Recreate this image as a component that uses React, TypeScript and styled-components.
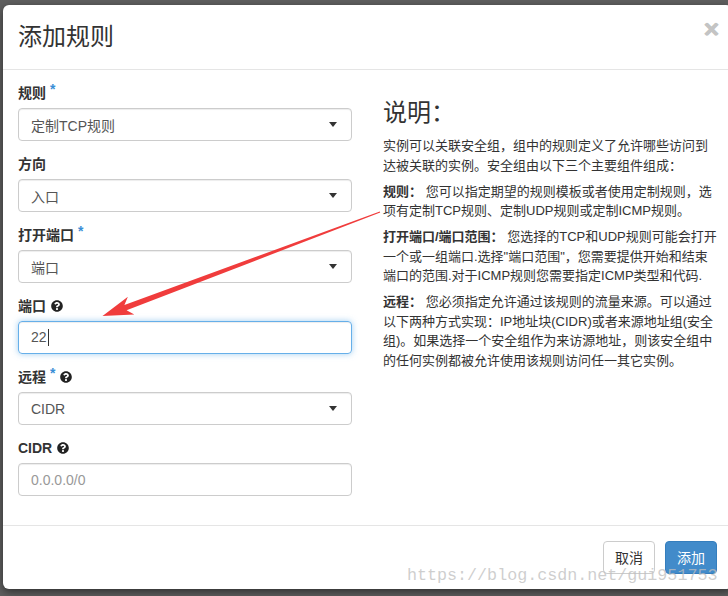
import styled, { createGlobalStyle } from "styled-components";
import { FaQuestionCircle } from "react-icons/fa";

const GlobalStyle = createGlobalStyle`
  html, body {
    margin: 0;
    padding: 0;
    overflow: hidden;
    background: #5f5f5f;
  }
  body {
    font-family: "Liberation Sans", "Noto Sans CJK SC", sans-serif;
    color: #333;
  }
`;

const Page = styled.div`
  position: relative;
  width: 728px;
  height: 596px;
  padding: 5px 0 0 3px;
  box-sizing: border-box;
  overflow: hidden;
`;

const Modal = styled.div`
  width: 729px;
  height: 584px;
  background: #fff;
  border-radius: 6px;
  box-shadow: 0 3px 9px rgba(0, 0, 0, 0.5);
  display: flex;
  flex-direction: column;
`;

const Header = styled.div`
  height: 64px;
  padding: 0 15px;
  border-bottom: 1px solid #e5e5e5;
  display: flex;
  align-items: center;
  justify-content: space-between;
`;

const Title = styled.h4`
  margin: 0;
  font-size: 24px;
  font-weight: normal;
  line-height: 26px;
  color: #333;
  padding-bottom: 1px;
`;

const Close = styled.span`
  align-self: flex-start;
  margin-top: 11px;
  margin-right: -2px;
  font-size: 26px;
  font-weight: bold;
  color: #c4c4c4;
  line-height: 1;
  text-shadow: 0.6px 0 0 #c4c4c4, -0.6px 0 0 #c4c4c4;
`;

const Body = styled.div`
  flex: 1;
  padding: 13px 15px 0;
  display: grid;
  grid-template-columns: 334px 345px;
  column-gap: 31px;
`;

const Form = styled.div`
  display: flex;
  flex-direction: column;
`;

const Group = styled.div`
  margin-bottom: 13px;
`;

const Label = styled.div`
  display: flex;
  align-items: center;
  gap: 4px;
  font-size: 14px;
  font-weight: bold;
  line-height: 20px;
  margin-bottom: 5px;
  color: #333;
`;

const Star = styled.span`
  color: #3a8fd6;
  font-size: 14px;
  align-self: flex-start;
  line-height: 12px;
`;

const Help = styled(FaQuestionCircle)`
  width: 12px;
  height: 12px;
  color: #222;
  margin-left: 1px;
`;

const Field = styled.div<{ $focused?: boolean }>`
  height: 33px;
  box-sizing: border-box;
  border: 1px solid ${(p) => (p.$focused ? "#66afe9" : "#ccc")};
  border-radius: 4px;
  box-shadow: ${(p) =>
    p.$focused
      ? "inset 0 1px 1px rgba(0,0,0,.075), 0 0 6px rgba(102,175,233,.6)"
      : "inset 0 1px 1px rgba(0,0,0,.075)"};
  padding: 0 12px;
  display: flex;
  align-items: center;
  justify-content: space-between;
  font-size: 14px;
  color: #555;
`;

const Placeholder = styled.span`
  color: #999;
`;

const Caret = styled.span`
  width: 0;
  height: 0;
  border-left: 4.5px solid transparent;
  border-right: 4.5px solid transparent;
  border-top: 5px solid #333;
  margin-right: 2px;
`;

const Cursor = styled.span`
  display: inline-block;
  width: 1px;
  height: 17px;
  background: #333;
  vertical-align: middle;
  margin-left: 1px;
`;

const Info = styled.div`
  padding-top: 17px;
`;

const InfoTitle = styled.h3`
  margin: 0 0 10px;
  font-size: 24px;
  font-weight: normal;
  line-height: 26px;
  color: #333;
`;

const InfoText = styled.p`
  margin: 0 0 6.5px;
  font-size: 13px;
  line-height: 19.5px;
  color: #333;
  white-space: nowrap;
`;

const Footer = styled.div`
  border-top: 1px solid #e5e5e5;
  padding: 15px 15px;
  display: flex;
  justify-content: flex-end;
  gap: 10px;
`;

const Button = styled.button<{ $primary?: boolean }>`
  font-family: inherit;
  font-size: 14px;
  line-height: 20px;
  height: 33px;
  padding: 6px 11px;
  border-radius: 4px;
  border: 1px solid ${(p) => (p.$primary ? "#357ebd" : "#ccc")};
  background: ${(p) => (p.$primary ? "#428bca" : "#fff")};
  color: ${(p) => (p.$primary ? "#fff" : "#333")};
`;

const Overlay = styled.svg`
  position: absolute;
  left: 0;
  top: 0;
  pointer-events: none;
`;

const Watermark = styled.div`
  position: absolute;
  left: 407px;
  top: 566px;
  font-family: "Liberation Mono", monospace;
  font-size: 16.7px;
  line-height: 20px;
  color: rgba(190, 190, 190, 0.75);
  pointer-events: none;
  white-space: nowrap;
`;

type FieldDef = {
  label: string;
  required?: boolean;
  help?: boolean;
  value?: string;
  placeholder?: string;
  select?: boolean;
  focused?: boolean;
};

const fields: FieldDef[] = [
  { label: "规则", required: true, value: "定制TCP规则", select: true },
  { label: "方向", value: "入口", select: true },
  { label: "打开端口", required: true, value: "端口", select: true },
  { label: "端口", help: true, value: "22", focused: true },
  { label: "远程", required: true, help: true, value: "CIDR", select: true },
  { label: "CIDR", help: true, placeholder: "0.0.0.0/0" },
];

export default function App() {
  return (
    <>
      <GlobalStyle />
      <Page>
        <Modal>
          <Header>
            <Title>添加规则</Title>
            <Close>×</Close>
          </Header>
          <Body>
            <Form>
              {fields.map((f) => (
                <Group key={f.label}>
                  <Label>
                    {f.label}
                    {f.required && <Star>*</Star>}
                    {f.help && <Help />}
                  </Label>
                  <Field $focused={f.focused}>
                    {f.placeholder ? (
                      <Placeholder>{f.placeholder}</Placeholder>
                    ) : (
                      <span>
                        {f.value}
                        {f.focused && <Cursor />}
                      </span>
                    )}
                    {f.select && <Caret />}
                  </Field>
                </Group>
              ))}
            </Form>
            <Info>
              <InfoTitle>说明：</InfoTitle>
              <InfoText>
                实例可以关联安全组，组中的规则定义了允许哪些访问到
                <br />
                达被关联的实例。安全组由以下三个主要组件组成：
              </InfoText>
              <InfoText>
                <b>规则：</b> 您可以指定期望的规则模板或者使用定制规则，选
                <br />
                项有定制TCP规则、定制UDP规则或定制ICMP规则。
              </InfoText>
              <InfoText>
                <b>打开端口/端口范围：</b> 您选择的TCP和UDP规则可能会打开
                <br />
                一个或一组端口.选择"端口范围"，您需要提供开始和结束
                <br />
                端口的范围.对于ICMP规则您需要指定ICMP类型和代码.
              </InfoText>
              <InfoText>
                <b>远程：</b> 您必须指定允许通过该规则的流量来源。可以通过
                <br />
                以下两种方式实现：IP地址块(CIDR)或者来源地址组(安全
                <br />
                组)。如果选择一个安全组作为来访源地址，则该安全组中
                <br />
                的任何实例都被允许使用该规则访问任一其它实例。
              </InfoText>
            </Info>
          </Body>
          <Footer>
            <Button>取消</Button>
            <Button $primary>添加</Button>
          </Footer>
        </Modal>
        <Overlay width="728" height="596" viewBox="0 0 728 596">
          <polygon
            fill="#f03c3c"
            points="380.2,212.6 126.6,310.2 134.3,314.4 102.5,316 127.9,296.8 124.4,305.1 379.8,211.4"
          />
        </Overlay>
        <Watermark>https://blog.csdn.net/gui951753</Watermark>
      </Page>
    </>
  );
}
